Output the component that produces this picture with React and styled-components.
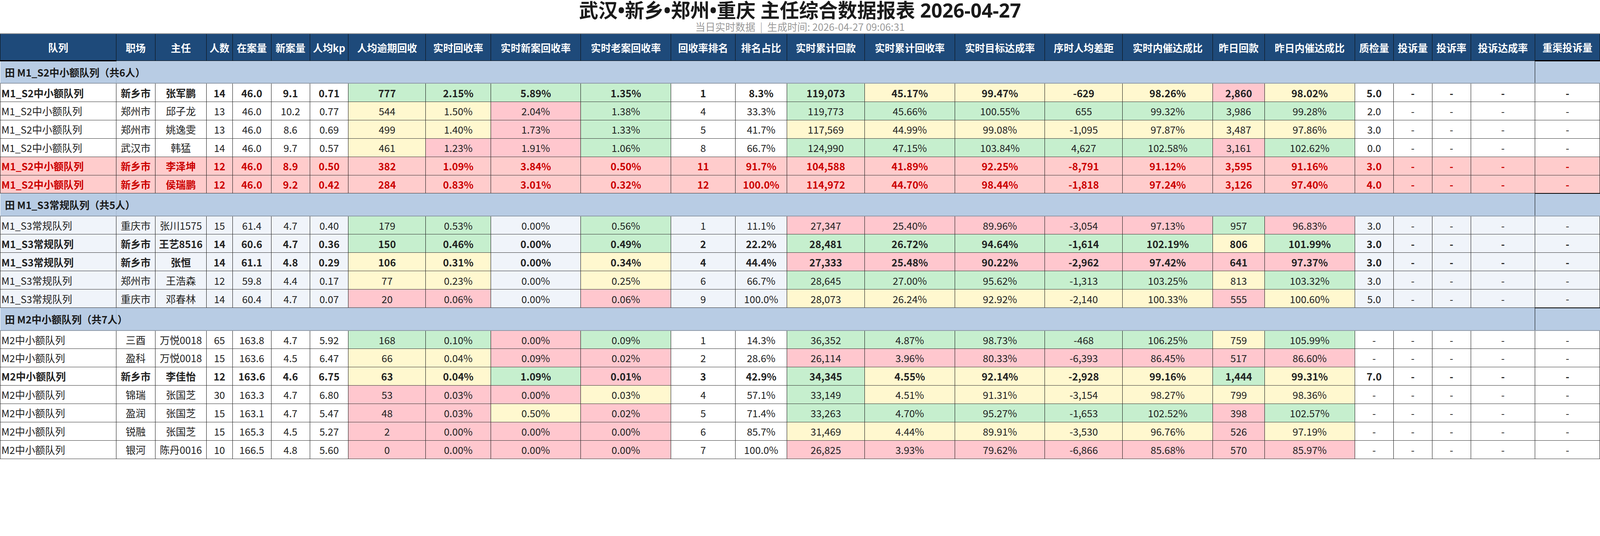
import React from 'react';
import styled, { createGlobalStyle, css } from 'styled-components';

// sizes are taken from a 4800px wide report; scale them with the viewport
const u = (n) => `${+(n / 48).toFixed(4)}vw`;

const GlobalStyle = createGlobalStyle`
  html, body {
    overflow: hidden;
  }
  body {
    margin: 0;
    background: #fff;
    color: #222;
    font-family: "Noto Sans CJK SC", "Noto Sans", "Liberation Sans", sans-serif;
  }
`;

const Page = styled.div`
  width: 100vw;
`;

const Title = styled.h1`
  margin: 0;
  font-family: "Noto Sans", "Noto Sans CJK SC", sans-serif;
  font-size: ${u(58)};
  line-height: ${u(62)};
  font-weight: 700;
  text-align: center;
  color: #1a1a1a;
`;

const SubTitle = styled.div`
  margin-bottom: ${u(4)};
  font-size: ${u(30)};
  line-height: ${u(34)};
  text-align: center;
  color: #9a9a9a;
`;

const Divider = styled.span`
  margin: 0 ${u(14)};
  color: #b5b5b5;
`;

const Table = styled.table`
  width: 100%;
  table-layout: fixed;
  border-collapse: collapse;
  border-top: 2px solid #9a9a9a;
`;

const HeadCell = styled.th`
  height: ${u(78)};
  padding: 0 ${u(4)};
  background: #1e4a7a;
  color: #fff;
  font-size: ${u(30)};
  font-weight: 700;
  text-align: center;
  white-space: nowrap;
  overflow: hidden;
  border: 1px solid #0d0d0d;
  ${(p) => p.$edge && css`border-bottom: 3px solid #000;`}
`;

const GroupRow = styled.tr`
  height: ${u(68)};
  background: #b8cce4;
`;

const GroupLabel = styled.td`
  padding-left: ${u(14)};
  font-size: ${u(30)};
  font-weight: 700;
  color: #1a1a1a;
  white-space: nowrap;
  overflow: visible;
  border-bottom: 2px solid #8f9aa8;
`;

const GroupFill = styled.td`
  border-left: 1px solid #9db1ca;
  border-bottom: 2px solid #8f9aa8;
`;

const GroupEnd = styled.td`
  border-left: 1px solid #000;
  border-top: 2px solid #000;
  border-bottom: 2px solid #8f9aa8;
`;

const rowBg = { alt: '#f0f4fa', alert: '#ffcccc' };
const toneBg = { g: '#c6efce', y: '#fff8cf', r: '#ffc7ce' };

const Row = styled.tr`
  height: ${u(55)};
  background: ${(p) => rowBg[p.$kind] || '#fff'};
  color: ${(p) => (p.$kind === 'alert' ? '#cc0000' : '#222')};
  font-weight: ${(p) => (p.$bold || p.$kind === 'alert' ? 700 : 400)};
`;

const Cell = styled.td`
  padding: 0 ${u(4)};
  font-size: ${u(30)};
  text-align: center;
  white-space: nowrap;
  overflow: hidden;
  border: 1px solid #111;
  border-bottom-color: #333;
  background: ${(p) => toneBg[p.$tone] || 'transparent'};
  ${(p) =>
    p.$first &&
    css`
      text-align: left;
      padding-left: ${u(3)};
    `}
`;

const COLS = [
  348, 117, 154, 78, 116, 116, 116, 232, 195, 270, 271, 193, 155, 233, 271, 270,
  233, 271, 155, 271, 116, 116, 116, 193, 194,
];

const HEADERS = [
  '队列', '职场', '主任', '人数', '在案量', '新案量', '人均kp', '人均逾期回收',
  '实时回收率', '实时新案回收率', '实时老案回收率', '回收率排名', '排名占比',
  '实时累计回款', '实时累计回收率', '实时目标达成率', '序时人均差距',
  '实时内催达成比', '昨日回款', '昨日内催达成比', '质检量', '投诉量', '投诉率',
  '投诉达成率', '重渠投诉量',
];

// value:tone  (g = 达标, y = 临界, r = 未达标)
const GROUPS = [
  {
    title: 'M1_S2中小额队列（共6人）',
    rows: [
      { bold: true, d: 'M1_S2中小额队列 新乡市 张军鹏 14 46.0 9.1 0.71 777:g 2.15%:g 5.89%:g 1.35%:g 1 8.3% 119,073:g 45.17%:y 99.47%:y -629:y 98.26%:y 2,860:r 98.02%:y 5.0 - - - -' },
      { d: 'M1_S2中小额队列 郑州市 邱子龙 13 46.0 10.2 0.77 544:y 1.50%:y 2.04%:r 1.38%:g 4 33.3% 119,773:g 45.66%:g 100.55%:g 655:g 99.32%:g 3,986:g 99.28%:g 2.0 - - - -' },
      { d: 'M1_S2中小额队列 郑州市 姚逸雯 13 46.0 8.6 0.69 499:y 1.40%:y 1.73%:r 1.33%:g 5 41.7% 117,569:y 44.99%:y 99.08%:y -1,095:y 97.87%:y 3,487:y 97.86%:y 3.0 - - - -' },
      { d: 'M1_S2中小额队列 武汉市 韩猛 14 46.0 9.7 0.57 461:y 1.23%:r 1.91%:r 1.06%:g 8 66.7% 124,990:g 47.15%:g 103.84%:g 4,627:g 102.58%:g 3,161:r 102.62%:g 0.0 - - - -' },
      { alert: true, d: 'M1_S2中小额队列 新乡市 李泽坤 12 46.0 8.9 0.50 382 1.09% 3.84% 0.50% 11 91.7% 104,588 41.89% 92.25% -8,791 91.12% 3,595 91.16% 3.0 - - - -' },
      { alert: true, d: 'M1_S2中小额队列 新乡市 侯瑞鹏 12 46.0 9.2 0.42 284 0.83% 3.01% 0.32% 12 100.0% 114,972 44.70% 98.44% -1,818 97.24% 3,126 97.40% 4.0 - - - -' },
    ],
  },
  {
    title: 'M1_S3常规队列（共5人）',
    alt: true,
    rows: [
      { d: 'M1_S3常规队列 重庆市 张川1575 15 61.4 4.7 0.40 179:g 0.53%:g 0.00% 0.56%:g 1 11.1% 27,347:r 25.40%:r 89.96%:r -3,054:r 97.13%:r 957:g 96.83%:r 3.0 - - - -' },
      { bold: true, d: 'M1_S3常规队列 新乡市 王艺8516 14 60.6 4.7 0.36 150:g 0.46%:g 0.00% 0.49%:g 2 22.2% 28,481:g 26.72%:g 94.64%:g -1,614:g 102.19%:g 806:y 101.99%:g 3.0 - - - -' },
      { bold: true, d: 'M1_S3常规队列 新乡市 张恒 14 61.1 4.8 0.29 106:y 0.31%:y 0.00% 0.34%:y 4 44.4% 27,333:r 25.48%:r 90.22%:r -2,962:r 97.42%:r 641:r 97.37%:r 3.0 - - - -' },
      { d: 'M1_S3常规队列 郑州市 王浩森 12 59.8 4.4 0.17 77:y 0.23%:y 0.00% 0.25%:y 6 66.7% 28,645:g 27.00%:g 95.62%:g -1,313:g 103.25%:g 813:y 103.32%:g 3.0 - - - -' },
      { d: 'M1_S3常规队列 重庆市 邓春林 14 60.4 4.7 0.07 20:r 0.06%:r 0.00% 0.06%:r 9 100.0% 28,073:y 26.24%:y 92.92%:y -2,140:y 100.33%:y 555:r 100.60%:y 5.0 - - - -' },
    ],
  },
  {
    title: 'M2中小额队列（共7人）',
    rows: [
      { d: 'M2中小额队列 三酉 万悦0018 65 163.8 4.7 5.92 168:g 0.10%:g 0.00%:r 0.09%:g 1 14.3% 36,352:g 4.87%:g 98.73%:g -468:g 106.25%:g 759:y 105.99%:g - - - - -' },
      { d: 'M2中小额队列 盈科 万悦0018 15 163.6 4.5 6.47 66:y 0.04%:y 0.09%:r 0.02%:r 2 28.6% 26,114:r 3.96%:r 80.33%:r -6,393:r 86.45%:r 517:r 86.60%:r - - - - -' },
      { bold: true, d: 'M2中小额队列 新乡市 李佳怡 12 163.6 4.6 6.75 63:y 0.04%:y 1.09%:g 0.01%:r 3 42.9% 34,345:g 4.55%:y 92.14%:y -2,928:y 99.16%:y 1,444:g 99.31%:y 7.0 - - - -' },
      { d: 'M2中小额队列 锦瑞 张国芝 30 163.3 4.7 6.80 53:r 0.03%:r 0.00%:r 0.03%:y 4 57.1% 33,149:g 4.51%:y 91.31%:y -3,154:y 98.27%:y 799:y 98.36%:y - - - - -' },
      { d: 'M2中小额队列 盈润 张国芝 15 163.1 4.7 5.47 48:r 0.03%:r 0.50%:y 0.02%:r 5 71.4% 33,263:g 4.70%:g 95.27%:g -1,653:g 102.52%:g 398:r 102.57%:g - - - - -' },
      { d: 'M2中小额队列 锐融 张国芝 15 165.3 4.5 5.27 2:r 0.00%:r 0.00%:r 0.00%:r 6 85.7% 31,469:y 4.44%:y 89.91%:y -3,530:y 96.76%:y 526:r 97.19%:y - - - - -' },
      { d: 'M2中小额队列 银河 陈丹0016 10 166.5 4.8 5.60 0:r 0.00%:r 0.00%:r 0.00%:r 7 100.0% 26,825:r 3.93%:r 79.62%:r -6,866:r 85.68%:r 570:r 85.97%:r - - - - -' },
    ],
  },
];

function DataRow({ row, alt }) {
  const kind = row.alert ? 'alert' : alt ? 'alt' : undefined;
  const cells = row.d.split(' ').map((t) => t.split(':'));
  return (
    <Row $kind={kind} $bold={row.bold}>
      {cells.map(([value, tone], i) => (
        <Cell key={i} $first={i === 0} $tone={row.alert ? undefined : tone}>
          {value}
        </Cell>
      ))}
    </Row>
  );
}

function Group({ group }) {
  return (
    <>
      <GroupRow>
        <GroupLabel>田 {group.title}</GroupLabel>
        <GroupFill colSpan={COLS.length - 2} />
        <GroupEnd />
      </GroupRow>
      {group.rows.map((row, i) => (
        <DataRow key={i} row={row} alt={group.alt} />
      ))}
    </>
  );
}

export default function App() {
  return (
    <Page>
      <GlobalStyle />
      <Title>武汉•新乡•郑州•重庆 主任综合数据报表 2026-04-27</Title>
      <SubTitle>
        当日实时数据<Divider>|</Divider>生成时间: 2026-04-27 09:06:31
      </SubTitle>
      <Table>
        <colgroup>
          {COLS.map((w, i) => (
            <col key={i} style={{ width: `${w / 48}%` }} />
          ))}
        </colgroup>
        <thead>
          <tr>
            {HEADERS.map((h, i) => (
              <HeadCell key={h} $edge={i === 0 || i === HEADERS.length - 1}>
                {h}
              </HeadCell>
            ))}
          </tr>
        </thead>
        <tbody>
          {GROUPS.map((g) => (
            <Group key={g.title} group={g} />
          ))}
        </tbody>
      </Table>
    </Page>
  );
}
